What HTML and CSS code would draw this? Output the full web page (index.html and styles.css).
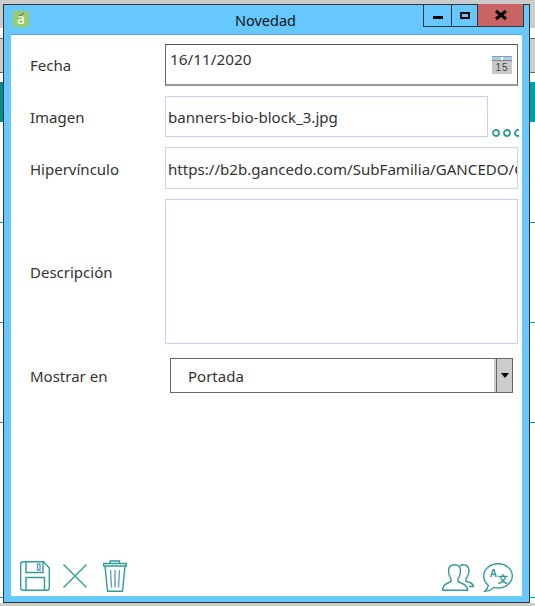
FILE: index.html
```html
<!DOCTYPE html>
<html>
    <head>
        <meta charset="utf-8">
        <title>Novedad</title>
        <link rel="stylesheet" href="styles.css">
    </head>
    <body>
        <!-- page behind the dialog -->
        <div class="behind">
            <div class="b-gray b-top"></div>
            <div class="b-white b-a"></div>
            <div class="b-gray b-mid"></div>
            <div class="b-white b-b"></div>
            <div class="b-teal"></div>
            <div class="b-row b-first"></div>
            <div class="b-row"></div>
            <div class="b-row"></div>
            <div class="b-last"></div>
            <div class="b-foot"></div>
        </div>

        <div class="window">
            <div class="titlebar">
                <div class="logo">á</div>
                <div class="title">Novedad</div>
                <div class="winbtns">
                    <div class="winbtn btn-min"><span></span></div>
                    <div class="winbtn btn-max"><span></span></div>
                    <div class="winbtn btn-close">
                        <svg width="14" height="12" viewBox="0 0 14 12"><path d="M2 2 L12 10 M12 2 L2 10" stroke="#000" stroke-width="3" fill="none"/></svg>
                    </div>
                </div>
            </div>
            <div class="content">
                <div class="form">
                    <div class="row row-fecha">
                        <label>Fecha</label>
                        <div class="box box-date">
                            <span>16/11/2020</span>
                            <svg class="cal" width="20" height="18" viewBox="0 0 20 18">
                                <rect width="20" height="18" fill="#c8c8c8"/>
                                <rect y="0" width="20" height="1" fill="#999"/>
                                <rect y="1" width="20" height="3" fill="#a6cdf5"/>
                                <rect x="9" y="1" width="2" height="3" fill="#fff"/>
                                <rect y="4" width="20" height="1" fill="#888"/>
                                <text x="10" y="15" font-size="10" letter-spacing="1" text-anchor="middle" fill="#444" font-family="Liberation Sans">15</text>
                            </svg>
                        </div>
                    </div>
                    <div class="row row-img">
                        <label>Imagen</label>
                        <div class="box box-lilac box-short">banners-bio-block_3.jpg</div>
                        <svg class="dots" width="27" height="8" viewBox="0 0 27 8">
                            <circle cx="4" cy="4" r="3" /><circle cx="15" cy="4" r="3" /><circle cx="26" cy="4" r="3" />
                        </svg>
                    </div>
                    <div class="row row-link">
                        <label>Hipervínculo</label>
                        <div class="box box-lilac box-wide">https://b2b.gancedo.com/SubFamilia/GANCEDO/GANCEDO</div>
                    </div>
                    <div class="row row-desc">
                        <label>Descripción</label>
                        <div class="box box-lilac box-wide box-area"></div>
                    </div>
                    <div class="row row-show">
                        <label>Mostrar en</label>
                        <div class="select">
                            <div class="select-val">Portada</div>
                            <div class="select-arrow"></div>
                        </div>
                    </div>
                </div>
                <div class="toolbar">
                    <div class="tools">
                        <svg width="30" height="30" viewBox="0 0 30 30" class="ico">
                            <path d="M0.7 3 Q0.7 0.7 3 0.7 H23.500 L29.300 7 V27 Q29.300 29.300 27 29.300 H3 Q0.700 29.300 0.700 27 Z"/>
                            <path d="M6 0.7 V11.500 H23 V0.700"/>
                            <path d="M6 29.300 V16.500 H24.500 V29.300"/>
                            <path d="M17.500 3 H20 V9 H17.500 Z" class="blue"/>
                        </svg>
                        <svg width="24" height="24" viewBox="0 0 24 24" class="ico">
                            <path d="M0.500 0.500 L23.500 23.500 M23.500 0.500 L0.500 23.500"/>
                        </svg>
                        <svg width="24" height="32" viewBox="0 0 24 32" class="ico ico-trash">
                            <path d="M7 3.500 V1 H16.500 V3.500"/>
                            <path d="M0.700 3.500 H23.300 V6 H0.700 Z"/>
                            <path d="M2 6 L4.500 31.300 H19.500 L22 6"/>
                            <path d="M7.500 10 L8.500 27.500 M12 10 V27.500 M16.500 10 L15.500 27.500" class="blue"/>
                        </svg>
                    </div>
                    <div class="tools tools-right">
                        <svg width="32" height="27" viewBox="0 0 32 27" class="ico">
                            <path d="M0.700 26.300 H25.500 Q25.500 21.500 20 19.500 L16 17.500 V15 Q18.500 11 18.500 7 Q18.500 0.700 12.500 0.700 Q6.500 0.700 6.500 7 Q6.500 11 9 15 V17.500 L5 19.500 Q0.700 21.500 0.700 26.300 Z"/>
                            <path d="M18 2 Q19.500 0.700 21 0.700 Q27 0.700 27 7 Q27 11 24 15 V17.500 L28 18.500 Q31.300 20 31.300 22.500 H27"/>
                        </svg>
                        <svg width="30" height="29" viewBox="0 0 30 29" class="ico">
                            <path d="M15 0.700 C22.800 0.700 29.300 6 29.300 12.800 C29.300 19.600 22.800 25 15 25 C13.600 25 12.200 24.800 10.800 24.400 C8.800 26.600 5.500 28.300 1.800 28.300 C3.800 26.500 5 24.500 5.300 22.300 C2.400 20 0.700 16.700 0.700 12.800 C0.700 6 7.200 0.700 15 0.700 Z"/>
                            <text x="7" y="14" class="ico-text">A</text>
                            <text x="14.500" y="20" class="ico-text">文</text>
                        </svg>
                    </div>
                </div>
            </div>
        </div>
    </body>
</html>
```

FILE: styles.css
```css
html, body {
    margin: 0;
    padding: 0;
    height: 606px;
    overflow: hidden;
    background: #fff;
}
body {
    font-family: "Noto Sans", "Open Sans", sans-serif;
    font-size: 15px;
    color: #333;
    position: relative;
}

/* page behind */
.behind {
    display: flex;
    flex-direction: column;
    height: 606px;
}
.b-gray { background: #ccc; }
.b-top { height: 28px; }
.b-white { background: #fff; }
.b-a { height: 10px; }
.b-b { height: 9px; }
.b-mid {
    height: 35px;
    border-top: 1px solid #666;
    border-bottom: 1px solid #666;
    box-sizing: border-box;
}
.b-teal {
    height: 40px;
    background: linear-gradient(90deg, #008b8b, #00a0a0);
}
.b-row {
    height: 100px;
    border-bottom: 1px solid #009999;
    box-sizing: border-box;
}
.b-first { height: 101px; }
.b-last {
    height: 175px;
    border-bottom: 1px solid #009999;
    box-sizing: border-box;
}
.b-foot { flex: 1; background: #ccc; margin-top: 5px; }

/* dialog */
.window {
    position: absolute;
    left: 3px;
    top: 4px;
    width: 527px;
    height: 599px;
    box-sizing: border-box;
    border: 1px solid #333;
    background: #66c8ff;
    display: flex;
    flex-direction: column;
    padding: 0 7px 5px 7px;
}
.titlebar {
    height: 29px;
    flex: none;
    display: flex;
    position: relative;
    border-bottom: 1px solid #5a9fd6;
}
.logo {
    width: 16px;
    height: 16px;
    margin: 6px 0 0 2px;
    background: #99cc66;
    border-radius: 2px;
    color: #fff;
    font-size: 14px;
    line-height: 16px;
    text-align: center;
    position: relative;
}
.logo::after {
    content: "";
    position: absolute;
    left: 6px;
    top: 3px;
    width: 5px;
    height: 1px;
    background: #445;
    transform: rotate(-35deg);
}
.title {
    position: absolute;
    left: 0;
    right: 2px;
    top: 5px;
    text-align: center;
    font-size: 14.5px;
    color: #111;
    line-height: 20px;
}
.winbtns {
    position: absolute;
    right: -2px;
    top: -1px;
    display: flex;
    height: 22px;
    border: 1px solid #333;
    border-top: 0;
}
.winbtn {
    display: flex;
    align-items: center;
    justify-content: center;
    box-sizing: border-box;
}
.btn-min { width: 28px; border-right: 1px solid #333; }
.btn-min span {
    width: 10px;
    height: 3px;
    background: #000;
    margin-top: 4px;
}
.btn-max { width: 26px; border-right: 1px solid #333; }
.btn-max span {
    width: 6px;
    height: 3px;
    border: 2px solid #000;
    margin-top: 1px;
}
.btn-close { width: 45px; background: #c86464; }

.content {
    flex: 1;
    background: #fff;
    display: flex;
    flex-direction: column;
    justify-content: space-between;
    min-height: 0;
    border-bottom: 1px solid #66d2dc;
}
.form {
    display: flex;
    flex-direction: column;
    padding: 9px 4px 0 19px;
}
.row {
    display: flex;
    align-items: center;
    position: relative;
}
.row label { width: 135px; flex: none; }
.row-fecha { height: 42px; margin-bottom: 10px; }
.row-img { height: 41px; margin-bottom: 10px; }
.row-link { height: 42px; margin-bottom: 10px; }
.row-link label { padding-top: 2px; }
.row-desc { height: 145px; margin-bottom: 14px; }
.row-show { height: 35px; }

.box {
    height: 100%;
    box-sizing: border-box;
    padding: 0 2px;
    display: flex;
    align-items: center;
    white-space: nowrap;
    overflow: hidden;
    flex: 1;
    font-size: 15.1px;
}
.box-lilac { border: 1px solid #ccccff; }
.box-short { flex: none; width: 323px; }
.box-wide { padding-top: 2px; }
.box-area { align-items: flex-start; }
.box-date {
    border: 1px solid #666;
    border-bottom: 2px solid #999;
    border-top-color: #555;
    align-items: flex-start;
    padding: 4px;
    position: relative;
    font-size: 15.3px;
}
.cal {
    position: absolute;
    right: 5px;
    bottom: 10px;
}
.dots {
    position: absolute;
    right: -1px;
    bottom: 0;
    fill: none;
    stroke: #339999;
    stroke-width: 1.8;
}

.select {
    display: flex;
    height: 100%;
    box-sizing: border-box;
    width: 343px;
    margin-left: 5px;
    border: 1px solid #666;
}
.select-val {
    flex: 1;
    padding-left: 17px;
    line-height: 35px;
    border-right: 2px solid #ccc;
}
.select-arrow {
    width: 15px;
    background: #ccc;
    border-left: 1px solid #666;
    position: relative;
}
.select-arrow::after {
    content: "";
    position: absolute;
    left: 4px;
    top: 14px;
    border: 4px solid transparent;
    border-top: 5px solid #000;
    border-bottom: 0;
}

.toolbar {
    display: flex;
    justify-content: space-between;
    align-items: flex-end;
    padding: 0 9px 4px 9px;
}
.tools {
    display: flex;
    align-items: center;
    gap: 13px;
}
.tools-right { gap: 9px; }
.ico {
    fill: none;
    stroke: #339999;
    stroke-width: 1.4;
}
.ico-trash { margin-left: 3px; }
.ico .blue { stroke: #6699cc; }
.ico-text {
    font-size: 10.5px;
    font-weight: bold;
    fill: #339999;
    stroke: none;
    font-family: "Noto Sans CJK SC", "Noto Sans", sans-serif;
}
```
